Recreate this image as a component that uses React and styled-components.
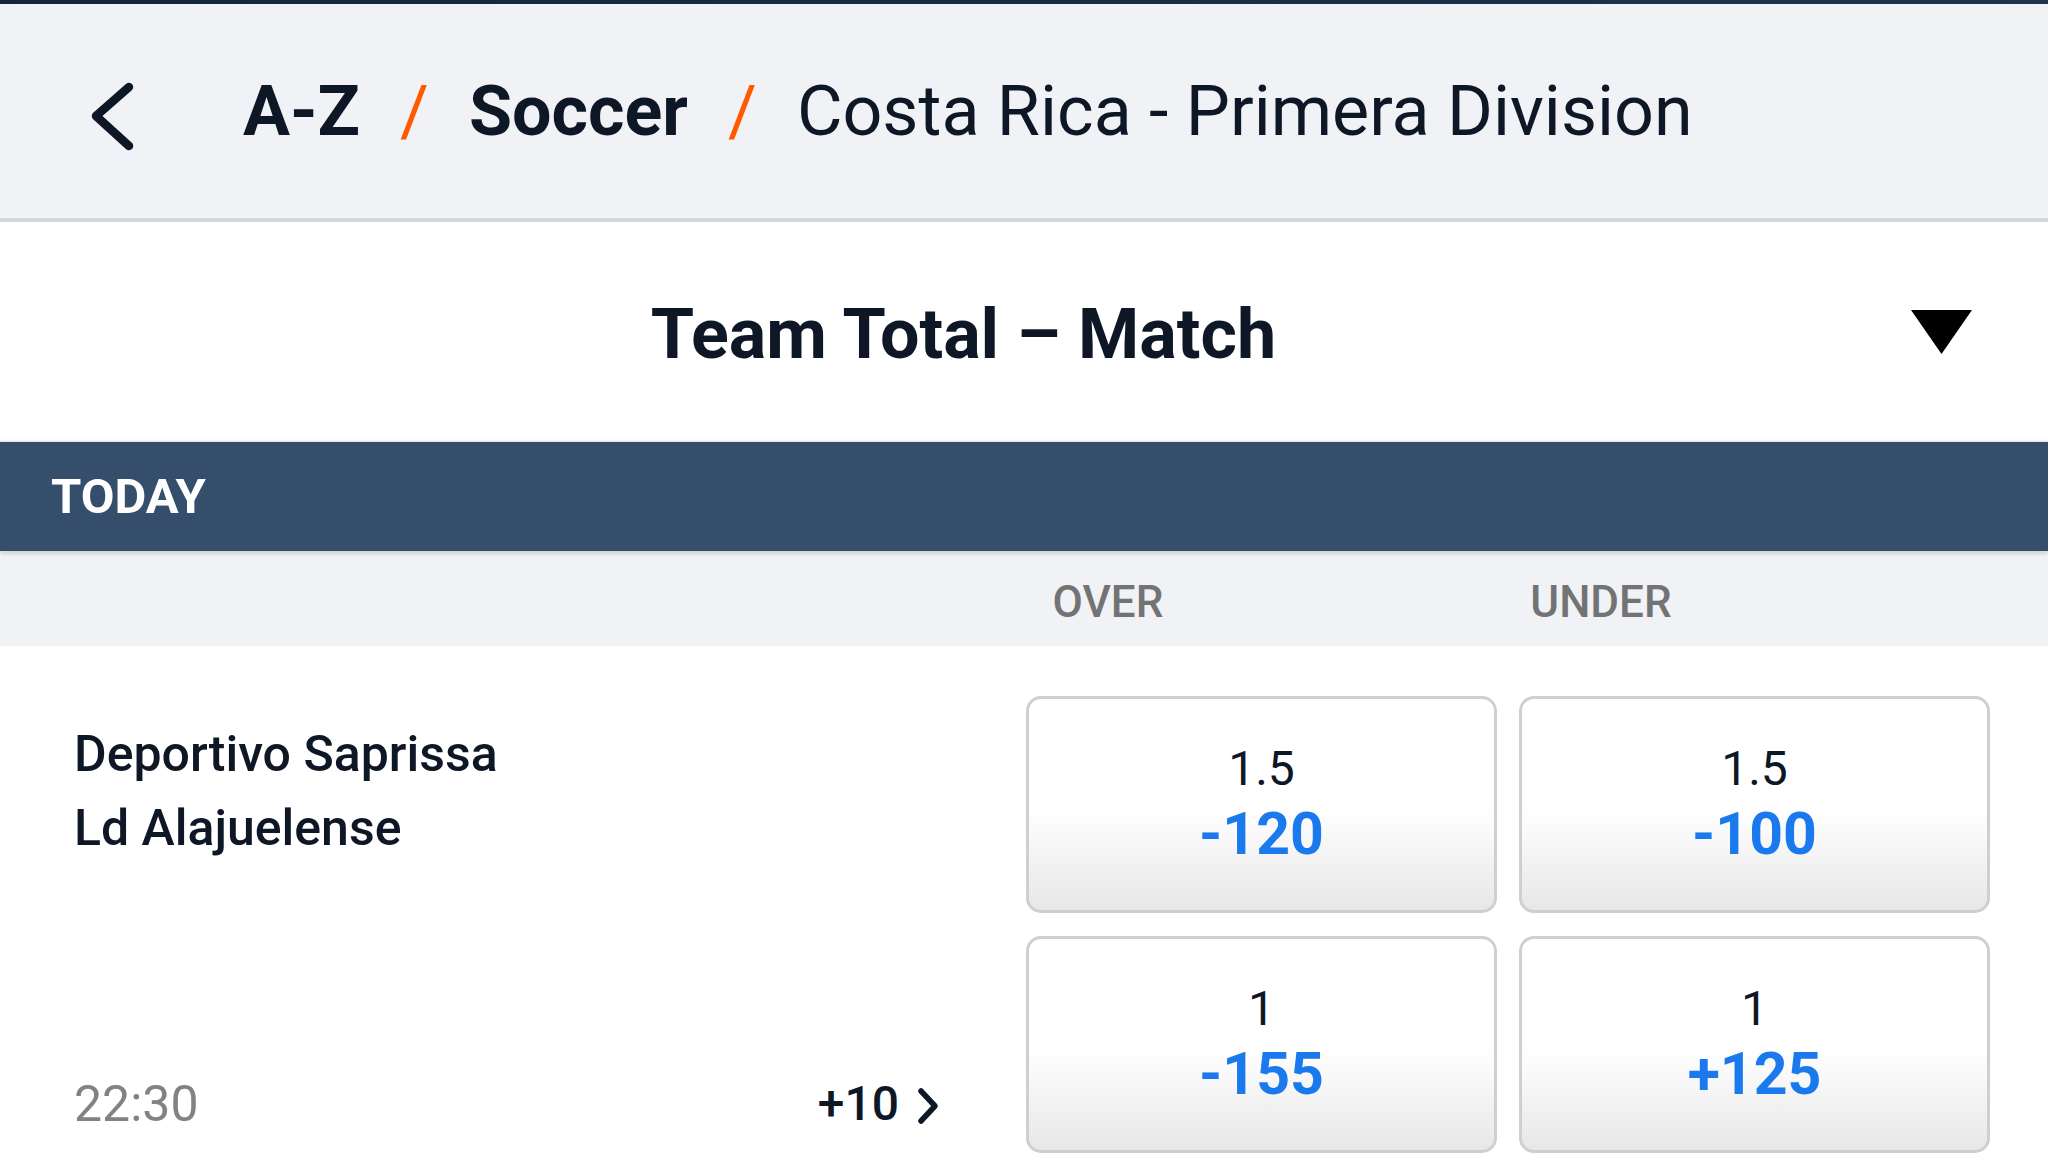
import React from "react";
import styled, { createGlobalStyle } from "styled-components";

const GlobalStyle = createGlobalStyle`
  html, body {
    margin: 0;
    padding: 0;
    background: #ffffff;
  }
  body {
    font-family: Roboto, "Liberation Sans", Arial, sans-serif;
    color: #0e1726;
    width: 2048px;
    height: 1164px;
    overflow: hidden;
  }
  * { box-sizing: border-box; }
`;

const Page = styled.div`
  display: flex;
  flex-direction: column;
  width: 2048px;
  height: 1164px;
  overflow: hidden;
`;

const TopLine = styled.div`
  height: 4px;
  background: linear-gradient(to right, #16253a, #1d3350);
`;

const Header = styled.header`
  height: 218px;
  display: flex;
  align-items: center;
  padding-left: 88px;
  background: #f0f2f5;
  border-bottom: 4px solid #d4d6da;
`;

const BackIcon = styled.svg`
  width: 48px;
  height: 80px;
  margin-top: 10px;
  flex: none;
`;

const Crumbs = styled.nav`
  display: flex;
  align-items: baseline;
  margin-left: 107px;
  font-size: 70px;
  line-height: 1;
  white-space: nowrap;
`;

const Crumb = styled.span`
  font-weight: ${(p) => (p.$strong ? 700 : 400)};
  color: #0e1726;
`;

const Sep = styled.span`
  color: #ff5a00;
  font-weight: 400;
  margin: 0 40px;
`;

const TitleBar = styled.div`
  height: 220px;
  display: flex;
  align-items: center;
  background: #ffffff;
  box-shadow: inset 0 -3px 3px -2px rgba(0, 0, 0, 0.12);
`;

const Title = styled.h1`
  flex: 1;
  margin: 0;
  padding-left: 16px;
  text-align: center;
  font-size: 70px;
  font-weight: 700;
  color: #0e1726;
  line-height: 1;
  margin-top: 4px;
`;

const Caret = styled.svg`
  width: 61px;
  height: 44px;
  margin-right: 76px;
  flex: none;
`;

const DayBar = styled.div`
  height: 109px;
  display: flex;
  align-items: center;
  padding-left: 51px;
  background: #344e6c;
  color: #ffffff;
  font-size: 49px;
  font-weight: 700;
  position: relative;
  z-index: 1;
  box-shadow: 0 3px 4px rgba(0, 0, 0, 0.13);
`;

const LabelsRow = styled.div`
  height: 95px;
  padding-top: 6px;
  display: grid;
  grid-template-columns: 471px 471px;
  column-gap: 22px;
  justify-content: end;
  align-items: center;
  padding-right: 58px;
  background: #f0f2f5;
`;

const ColLabel = styled.div`
  width: 164px;
  text-align: center;
  font-size: 44px;
  font-weight: 500;
  color: #737373;
`;

const EventRow = styled.section`
  flex: 1;
  display: flex;
  padding: 50px 58px 11px 74px;
  background: #ffffff;
`;

const EventInfo = styled.div`
  flex: 1;
  display: flex;
  flex-direction: column;
  justify-content: space-between;
  margin-right: 85px;
`;

const Teams = styled.div`
  margin-top: 21px;
  display: flex;
  flex-direction: column;
`;

const Team = styled.div`
  font-size: 50px;
  font-weight: 500;
  line-height: 74px;
  color: #0e1726;
  white-space: nowrap;
`;

const MetaRow = styled.div`
  display: flex;
  justify-content: space-between;
  align-items: center;
  margin-bottom: 20px;
  font-size: 48px;
  line-height: 58px;
`;

const Time = styled.span`
  color: #828282;
  font-weight: 400;
  font-size: 50px;
`;

const More = styled.span`
  display: flex;
  align-items: center;
  gap: 16px;
  color: #0e1726;
  font-weight: 500;
`;

const MoreChevron = styled.svg`
  width: 26px;
  height: 40px;
  margin-top: 4px;
`;

const OddsGrid = styled.div`
  display: grid;
  grid-template-columns: 471px 471px;
  grid-auto-rows: 217px;
  column-gap: 22px;
  row-gap: 23px;
`;

const OddButton = styled.button`
  display: flex;
  flex-direction: column;
  align-items: center;
  justify-content: center;
  padding: 2px 0 0;
  border: 3px solid #cfcfcf;
  border-radius: 15px;
  background: linear-gradient(to bottom, #ffffff 0%, #ffffff 52%, #e7e7e7 100%);
  font-family: inherit;
  cursor: pointer;
`;

const Line = styled.span`
  font-size: 48px;
  line-height: 55px;
  font-weight: 400;
  color: #0e1726;
`;

const Price = styled.span`
  font-size: 59px;
  line-height: 75px;
  font-weight: 700;
  color: #1a7aed;
`;

const markets = [
  { line: "1.5", over: "-120", under: "-100" },
  { line: "1", over: "-155", under: "+125" },
];

export default function App() {
  return (
    <>
      <GlobalStyle />
      <Page>
        <TopLine />
        <Header>
          <BackIcon viewBox="0 0 48 80" aria-hidden="true">
            <polyline
              points="41,11 8,40 41,70"
              fill="none"
              stroke="#0e1726"
              strokeWidth="8.5"
              strokeLinecap="round"
              strokeLinejoin="round"
            />
          </BackIcon>
          <Crumbs>
            <Crumb $strong>A-Z</Crumb>
            <Sep>/</Sep>
            <Crumb $strong>Soccer</Crumb>
            <Sep>/</Sep>
            <Crumb>Costa Rica - Primera Division</Crumb>
          </Crumbs>
        </Header>

        <TitleBar>
          <Title>Team Total – Match</Title>
          <Caret viewBox="0 0 61 44" aria-hidden="true">
            <polygon points="0,0 61,0 30.5,44" fill="#000000" />
          </Caret>
        </TitleBar>

        <DayBar>TODAY</DayBar>

        <LabelsRow>
          <ColLabel>OVER</ColLabel>
          <ColLabel>UNDER</ColLabel>
        </LabelsRow>

        <EventRow>
          <EventInfo>
            <Teams>
              <Team>Deportivo Saprissa</Team>
              <Team>Ld Alajuelense</Team>
            </Teams>
            <MetaRow>
              <Time>22:30</Time>
              <More>
                +10
                <MoreChevron viewBox="0 0 26 40" aria-hidden="true">
                  <polyline
                    points="6,5 20,20 6,35"
                    fill="none"
                    stroke="#0e1726"
                    strokeWidth="5.5"
                    strokeLinecap="round"
                    strokeLinejoin="round"
                  />
                </MoreChevron>
              </More>
            </MetaRow>
          </EventInfo>
          <OddsGrid>
            {markets.map((m) => (
              <React.Fragment key={m.line}>
                <OddButton>
                  <Line>{m.line}</Line>
                  <Price>{m.over}</Price>
                </OddButton>
                <OddButton>
                  <Line>{m.line}</Line>
                  <Price>{m.under}</Price>
                </OddButton>
              </React.Fragment>
            ))}
          </OddsGrid>
        </EventRow>
      </Page>
    </>
  );
}
